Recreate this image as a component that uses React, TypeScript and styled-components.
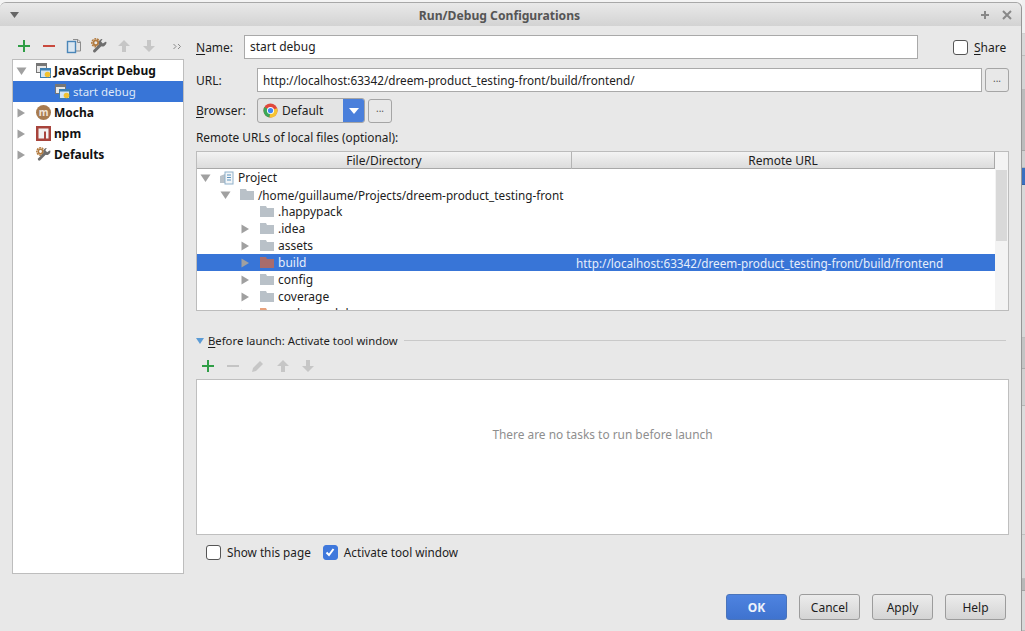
import styled, { createGlobalStyle } from 'styled-components'

const GlobalStyle = createGlobalStyle`
  html, body {
    margin: 0;
    padding: 0;
    background: #cfcfcf;
  }
  * {
    box-sizing: border-box;
  }
  u {
    text-underline-offset: 2px;
  }
`
const Screen = styled.div`
  display: flex;
  width: 1025px;
  height: 631px;
  overflow: hidden;
  font-family: 'Noto Sans', 'Open Sans', sans-serif;
  font-size: 12px;
  color: #1d1d1d;
  background: #f4f4f4;
`
const Dialog = styled.div`
  display: flex;
  flex-direction: column;
  flex: none;
  width: 1022px;
  height: 631px;
  margin-top: 2px;
  background: #e8e8e8;
  border-top: 1px solid #a8a8a8;
  border-right: 1px solid #969696;
  border-top-left-radius: 6px;
  border-top-right-radius: 6px;
`
const TitleBar = styled.div`
  display: flex;
  align-items: center;
  justify-content: space-between;
  flex: none;
  height: 23px;
  padding: 0 8px 0 10px;
  background: linear-gradient(#e9e9e9, #d3d3d3);
  border-top-left-radius: 6px;
  border-top-right-radius: 6px;
`
const TitleText = styled.div`
  margin-left: 1px;
  padding-top: 1px;
  font-weight: 700;
  font-size: 12.15px;
  color: #555;
`
const TitleActions = styled.div`
  display: flex;
  align-items: center;
  gap: 10px;
`
const Body = styled.div`
  display: flex;
  flex: 1;
  min-height: 0;
`
const Sidebar = styled.div`
  display: flex;
  flex-direction: column;
  flex: none;
  width: 196px;
  padding: 0 12px;
`
const SideToolbar = styled.div`
  display: flex;
  align-items: center;
  gap: 9px;
  height: 33px;
  padding: 7px 0 0 4px;
`
const Tree = styled.div`
  width: 172px;
  height: 515px;
  background: #fff;
  border: 1px solid #bdbdbd;
`
const TreeRow = styled.div<{ $selected?: boolean; $indent?: number; $bold?: boolean }>`
  display: flex;
  align-items: center;
  gap: 3px;
  height: 21px;
  padding-left: ${(p) => p.$indent ?? 2}px;
  font-size: ${(p) => (p.$selected ? 11.5 : 12)}px;
  font-weight: ${(p) => (p.$bold ? 700 : 400)};
  color: ${(p) => (p.$selected ? '#dfe8f8' : '#111')};
  background: ${(p) => (p.$selected ? '#3875d7' : 'transparent')};
  white-space: nowrap;
`
const Spacer = styled.span`
  width: 3px;
`
const Main = styled.div`
  display: flex;
  flex-direction: column;
  flex: 1;
  min-width: 0;
  padding: 9px 12px 0 0;
`
const FormRow = styled.div<{ $height: number; $mb?: number }>`
  display: flex;
  align-items: center;
  height: ${(p) => p.$height}px;
  margin-bottom: ${(p) => p.$mb ?? 0}px;
`
const FieldLabel = styled.label<{ $width: number }>`
  flex: none;
  width: ${(p) => p.$width}px;
`
const TextInput = styled.div<{ $width: number }>`
  display: flex;
  align-items: center;
  flex: none;
  width: ${(p) => p.$width}px;
  height: 24px;
  padding: 0 0 1px 5px;
  background: #fff;
  border: 1px solid #a9a9a9;
  white-space: nowrap;
  overflow: hidden;
`
const LongPath = styled.span`
  font-size: 11.72px;
`
const DotsButton = styled.button`
  flex: none;
  width: 24px;
  height: 24px;
  margin-left: 3px;
  padding: 0 0 5px;
  font: inherit;
  font-size: 10px;
  color: #555;
  background: #e8e8e8;
  border: 1px solid #a5a5a5;
  border-radius: 3px;
`
const ShareWrap = styled.div`
  display: flex;
  align-items: center;
  gap: 6px;
  margin-left: 35px;
`
const CheckBox = styled.span<{ $checked?: boolean }>`
  display: flex;
  align-items: center;
  justify-content: center;
  flex: none;
  width: 15px;
  height: 15px;
  background: ${(p) => (p.$checked ? '#3f78dc' : '#fff')};
  border: 1px solid ${(p) => (p.$checked ? '#3f78dc' : '#555')};
  border-radius: 3px;
`
const Combo = styled.div`
  display: flex;
  align-items: center;
  flex: none;
  gap: 4px;
  width: 108px;
  height: 25px;
  padding-left: 5px;
  background: #e4e4e4;
  border: 1px solid #a5a5a5;
  border-radius: 3px;
  overflow: hidden;
`
const ComboArrow = styled.span`
  display: flex;
  align-items: center;
  justify-content: center;
  width: 21px;
  height: 25px;
  margin-left: auto;
  background: #4a7fdb;
`
const SectionLabel = styled.div`
  height: 17px;
  margin-bottom: 5px;
  font-size: 11.85px;
  line-height: 17px;
`
const TableBox = styled.div`
  display: flex;
  flex: none;
  width: 813px;
  height: 160px;
  background: #fff;
  border: 1px solid #bcbcbc;
  overflow: hidden;
`
const TableMain = styled.div`
  flex: none;
  width: 798px;
`
const TableHeader = styled.div`
  display: grid;
  grid-template-columns: 375px 1fr;
  height: 17px;
  background: linear-gradient(#f3f3f3, #dcdcdc);
  border-right: 1px solid #a8a8a8;
  border-bottom: 1px solid #a8a8a8;
`
const HeaderCell = styled.div<{ $divider?: boolean }>`
  text-align: center;
  line-height: 17px;
  border-right: ${(p) => (p.$divider ? '1px solid #b4b4b4' : 'none')};
`
const DirRow = styled.div<{ $selected?: boolean }>`
  display: grid;
  grid-template-columns: 379px 1fr;
  align-items: center;
  height: 17px;
  color: ${(p) => (p.$selected ? '#e6eefb' : '#1d1d1d')};
  background: ${(p) => (p.$selected ? '#3875d7' : 'transparent')};
  white-space: nowrap;
`
const DirCell = styled.div<{ $depth: number }>`
  display: flex;
  align-items: center;
  gap: 4px;
  padding-left: ${(p) => p.$depth}px;
`
const ArrowSlot = styled.span`
  display: flex;
  align-items: center;
  justify-content: center;
  flex: none;
  width: 16px;
  margin-right: 3px;
`
const ScrollTrack = styled.div`
  flex: 1;
  padding: 18px 1px 0;
  background: #f3f3f3;
`
const ScrollThumb = styled.div`
  height: 71px;
  background: #d9d9d9;
`
const BeforeHeader = styled.div`
  display: flex;
  align-items: center;
  gap: 4px;
  height: 17px;
  margin-top: 21px;
  padding-right: 3px;
  font-size: 11.3px;
`
const HeaderRule = styled.div`
  flex: 1;
  height: 1px;
  margin-left: 2px;
  background: #c9c9c9;
`
const BeforeToolbar = styled.div`
  display: flex;
  align-items: center;
  gap: 9px;
  height: 21px;
  margin: 6px 0 3px;
  padding-left: 4px;
`
const TasksBox = styled.div`
  display: flex;
  align-items: center;
  justify-content: center;
  width: 813px;
  height: 156px;
  padding-bottom: 46px;
  font-size: 11.9px;
  color: #8e8e8e;
  background: #fff;
  border: 1px solid #bfbfbf;
`
const OptionsRow = styled.div`
  display: flex;
  align-items: center;
  height: 18px;
  margin-top: 8px;
  padding-left: 10px;
  font-size: 11.75px;
`
const Option = styled.div`
  display: flex;
  align-items: center;
  gap: 6px;
  margin-right: 12px;
`
const Footer = styled.div`
  display: flex;
  justify-content: flex-end;
  gap: 12px;
  margin-top: 33px;
  padding-right: 3px;
`
const DialogButton = styled.button<{ $primary?: boolean }>`
  width: 61px;
  height: 26px;
  padding: 0;
  font: inherit;
  font-weight: ${(p) => (p.$primary ? 700 : 400)};
  color: ${(p) => (p.$primary ? '#eef3fb' : '#1d1d1d')};
  background: ${(p) => (p.$primary ? 'linear-gradient(#4e83e0, #3f73cf)' : 'linear-gradient(#ececec, #d4d4d4)')};
  border: 1px solid ${(p) => (p.$primary ? '#4a74bb' : '#9c9c9c')};
  border-radius: 3px;
`
const Strip = styled.div`
  display: flex;
  flex-direction: column;
  flex: 1;
`
const Band = styled.div<{ $height: number; $color: string }>`
  flex: none;
  height: ${(p) => p.$height}px;
  background: ${(p) => p.$color};
  border-bottom: 1px solid rgba(0, 0, 0, 0.12);
`

const Plus = ({ muted }: { muted?: boolean }) => (
  <svg width="16" height="16" viewBox="0 0 16 16">
    <path d="M8 2v12M2 8h12" stroke={muted ? '#c4c4c4' : '#2f9e46'} strokeWidth="2" />
  </svg>
)
const Minus = ({ muted }: { muted?: boolean }) => (
  <svg width="16" height="16" viewBox="0 0 16 16">
    <path d="M2 8h12" stroke={muted ? '#c4c4c4' : '#c9493d'} strokeWidth="2" />
  </svg>
)
const Copy = () => (
  <svg width="16" height="16" viewBox="0 0 16 16">
    <path d="M7 1.500h5l2.500 2.500v9H10" fill="#e4e4e4" stroke="#8d8d8d" />
    <path d="M11.500 1.500v3h3" fill="none" stroke="#8d8d8d" />
    <rect x="1.500" y="3.500" width="8" height="11" fill="#dbe7f1" stroke="#4a86b8" strokeWidth="1.400" />
  </svg>
)
const Wrench = ({ size = 16 }: { size?: number }) => (
  <svg width={size} height={size} viewBox="0 0 16 16" style={{ flex: 'none' }}>
    <circle cx="4.800" cy="4.800" r="4" fill="none" stroke="#b27a3e" strokeWidth="1.400" strokeDasharray="2 0.800" />
    <circle cx="4.800" cy="4.800" r="2.400" fill="none" stroke="#b27a3e" strokeWidth="1.800" />
    <path d="M3.500 13L10 6.500" stroke="#6e6e6e" strokeWidth="3" strokeLinecap="round" />
    <path d="M15.500 4a4 4 0 0 1-6.500 3.500 4 4 0 0 1 1.500-6.500l1 .1-1.500 2.400 1.800 2 2.700-1.700z" fill="#6e6e6e" />
  </svg>
)
const UpArrow = () => (
  <svg width="16" height="16" viewBox="0 0 16 16">
    <path d="M8 2l6 6h-4v6H6V8H2z" fill="#c6c6c6" />
  </svg>
)
const DownArrow = () => (
  <svg width="16" height="16" viewBox="0 0 16 16">
    <path d="M8 14l6-6h-4V2H6v6H2z" fill="#c6c6c6" />
  </svg>
)
const Pencil = () => (
  <svg width="16" height="16" viewBox="0 0 16 16">
    <path d="M2 14l1-4 7-7 3 3-7 7z" fill="#c6c6c6" />
  </svg>
)
const More = () => (
  <svg width="16" height="16" viewBox="0 0 16 16">
    <path d="M7.500 6L10 8.500 7.500 11M12 6l2.500 2.500L12 11" fill="none" stroke="#8a8a8a" />
  </svg>
)
const Triangle = ({ open }: { open?: boolean }) => (
  <svg width="12" height="12" viewBox="0 0 12 12" style={{ flex: 'none' }}>
    <path d={open ? 'M1.500 2.500h10L6.500 10z' : 'M2.500 1.500L10 6l-7.500 4.500z'} fill="#a0a0a0" />
  </svg>
)
const DebugIcon = () => (
  <svg width="15" height="15" viewBox="0 0 15 15" style={{ flex: 'none' }}>
    <rect x="0.500" y="0.500" width="10" height="9" fill="#e8e8e8" stroke="#767676" />
    <path d="M1 2h9" stroke="#767676" strokeWidth="2" />
    <rect x="4.500" y="5.500" width="10" height="9" fill="#d3e5f3" stroke="#3c7fb1" />
    <path d="M5 6.500h9" stroke="#3c7fb1" strokeWidth="2" />
    <circle cx="11.500" cy="11.500" r="2.800" fill="#f2c230" />
  </svg>
)
const MochaIcon = () => (
  <svg width="15" height="15" viewBox="0 0 15 15" style={{ flex: 'none' }}>
    <circle cx="7.500" cy="7.500" r="7.500" fill="#a87b4f" />
    <text x="7.500" y="10.500" fontSize="10" fill="#f1e4d6" textAnchor="middle" fontFamily="Noto Sans">m</text>
  </svg>
)
const NpmIcon = () => (
  <svg width="15" height="15" viewBox="0 0 15 15" style={{ flex: 'none' }}>
    <rect width="15" height="15" fill="#a8443c" />
    <path d="M2.500 2.500h10v10h-2.500V5.500H8v7H2.500z" fill="#f2f2f2" />
  </svg>
)
const ProjectIcon = () => (
  <svg width="14" height="14" viewBox="0 0 14 14" style={{ flex: 'none' }}>
    <path d="M0 5l5-2v9H0z" fill="#b9c1c8" />
    <rect x="5" y="1" width="8" height="12" fill="#f3f6f8" stroke="#8fb1cb" />
    <path d="M7 4h4M7 6.500h4M7 9h4" stroke="#5b93bf" />
  </svg>
)
const Folder = ({ color = '#b9c1c8' }: { color?: string }) => (
  <svg width="14" height="11" viewBox="0 0 14 11" style={{ flex: 'none' }}>
    <path d="M0 0h6l1 2h7v9H0z" fill={color} />
  </svg>
)
const ChromeIcon = () => (
  <svg width="15" height="15" viewBox="0 0 16 16" style={{ flex: 'none' }}>
    <circle cx="8" cy="8" r="7.500" fill="#e0483c" />
    <path d="M8 8L1.500 4.200A7.500 7.500 0 0 0 7 15.400z" fill="#3aa757" />
    <path d="M8 8l7-2.500A7.500 7.500 0 0 1 7 15.400z" fill="#f6c432" />
    <circle cx="8" cy="8" r="3.800" fill="#fff" />
    <circle cx="8" cy="8" r="2.800" fill="#4286f5" />
  </svg>
)

const dirs = [
  { name: '.happypack' },
  { name: '.idea', arrow: true },
  { name: 'assets', arrow: true },
  { name: 'build', arrow: true, selected: true, color: '#a96c6c', remote: 'http://localhost:63342/dreem-product_testing-front/build/frontend' },
  { name: 'config', arrow: true },
  { name: 'coverage', arrow: true },
  { name: 'node_modules', arrow: true, color: '#e8a27c' },
]

// background windows showing behind the dialog, on the right edge
const bands = [
  { height: 34, color: '#f0f0f0' },
  { height: 22, color: '#d8d8d8' },
  { height: 34, color: '#d4d4d4' },
  { height: 61, color: '#bcbcbc' },
  { height: 17, color: '#d0d0d0' },
  { height: 17, color: '#3a70c0' },
  { height: 153, color: '#d8d8d8' },
  { height: 31, color: '#c4c4c4' },
  { height: 37, color: '#d0d0d0' },
  { height: 129, color: '#dcdcdc' },
  { height: 44, color: '#d8d8d8' },
  { height: 12, color: '#b8b8b8' },
  { height: 40, color: '#d8d8d8' },
]

export default function App(): JSX.Element {
  return (
    <Screen>
      <GlobalStyle />
      <Dialog>
        <TitleBar>
          <svg width="9" height="6" viewBox="0 0 9 6">
            <path d="M0 0h9L4.500 6z" fill="#666" />
          </svg>
          <TitleText>Run/Debug Configurations</TitleText>
          <TitleActions>
            <svg width="12" height="12" viewBox="0 0 12 12">
              <path d="M6 2v8M2 6h8" stroke="#888" strokeWidth="2" />
            </svg>
            <svg width="12" height="12" viewBox="0 0 12 12">
              <path d="M2 2l8 8M10 2l-8 8" stroke="#888" strokeWidth="2" />
            </svg>
          </TitleActions>
        </TitleBar>
        <Body>
          <Sidebar>
            <SideToolbar>
              <Plus />
              <Minus />
              <Copy />
              <Wrench />
              <UpArrow />
              <DownArrow />
              <More />
            </SideToolbar>
            <Tree>
              <TreeRow $bold>
                <Triangle open />
                <Spacer />
                <DebugIcon />
                JavaScript Debug
              </TreeRow>
              <TreeRow $selected $indent={42}>
                <DebugIcon />
                start debug
              </TreeRow>
              <TreeRow $bold>
                <Triangle />
                <Spacer />
                <MochaIcon />
                Mocha
              </TreeRow>
              <TreeRow $bold>
                <Triangle />
                <Spacer />
                <NpmIcon />
                npm
              </TreeRow>
              <TreeRow $bold>
                <Triangle />
                <Spacer />
                <Wrench size={15} />
                Defaults
              </TreeRow>
            </Tree>
          </Sidebar>
          <Main>
            <FormRow $height={24} $mb={9}>
              <FieldLabel $width={48}>
                <u>N</u>ame:
              </FieldLabel>
              <TextInput $width={674}>start debug</TextInput>
              <ShareWrap>
                <CheckBox />
                <span>
                  <u>S</u>hare
                </span>
              </ShareWrap>
            </FormRow>
            <FormRow $height={24} $mb={6}>
              <FieldLabel $width={61}>URL:</FieldLabel>
              <TextInput $width={725}>
                <LongPath>http://localhost:63342/dreem-product_testing-front/build/frontend/</LongPath>
              </TextInput>
              <DotsButton>...</DotsButton>
            </FormRow>
            <FormRow $height={25} $mb={6}>
              <FieldLabel $width={61}>
                <u>B</u>rowser:
              </FieldLabel>
              <Combo>
                <ChromeIcon />
                Default
                <ComboArrow>
                  <svg width="10" height="8" viewBox="0 0 10 8">
                    <path d="M0 1h10L5 7z" fill="#fff" />
                  </svg>
                </ComboArrow>
              </Combo>
              <DotsButton>...</DotsButton>
            </FormRow>
            <SectionLabel>Remote URLs of local files (optional):</SectionLabel>
            <TableBox>
              <TableMain>
                <TableHeader>
                  <HeaderCell $divider>File/Directory</HeaderCell>
                  <HeaderCell>Remote URL</HeaderCell>
                </TableHeader>
                <DirRow>
                  <DirCell $depth={0}>
                    <ArrowSlot>
                      <Triangle open />
                    </ArrowSlot>
                    <ProjectIcon />
                    Project
                  </DirCell>
                </DirRow>
                <DirRow>
                  <DirCell $depth={20}>
                    <ArrowSlot>
                      <Triangle open />
                    </ArrowSlot>
                    <Folder />
                    <LongPath>/home/guillaume/Projects/dreem-product_testing-front</LongPath>
                  </DirCell>
                </DirRow>
                {dirs.map((d) => (
                  <DirRow key={d.name} $selected={d.selected}>
                    <DirCell $depth={40}>
                      <ArrowSlot>{d.arrow && <Triangle />}</ArrowSlot>
                      <Folder color={d.color} />
                      {d.name}
                    </DirCell>
                    <LongPath>{d.remote}</LongPath>
                  </DirRow>
                ))}
              </TableMain>
              <ScrollTrack>
                <ScrollThumb />
              </ScrollTrack>
            </TableBox>
            <BeforeHeader>
              <svg width="8" height="6" viewBox="0 0 8 6">
                <path d="M0 0h8L4 6z" fill="#5b9bd5" />
              </svg>
              <span>
                <u>B</u>efore launch: Activate tool window
              </span>
              <HeaderRule />
            </BeforeHeader>
            <BeforeToolbar>
              <Plus />
              <Minus muted />
              <Pencil />
              <UpArrow />
              <DownArrow />
            </BeforeToolbar>
            <TasksBox>There are no tasks to run before launch</TasksBox>
            <OptionsRow>
              <Option>
                <CheckBox />
                Show this page
              </Option>
              <Option>
                <CheckBox $checked>
                  <svg width="10" height="10" viewBox="0 0 10 10">
                    <path d="M1.500 5.500l2.500 2.500 4.500-6" fill="none" stroke="#fff" strokeWidth="2" />
                  </svg>
                </CheckBox>
                Activate tool window
              </Option>
            </OptionsRow>
            <Footer>
              <DialogButton $primary>OK</DialogButton>
              <DialogButton>Cancel</DialogButton>
              <DialogButton>Apply</DialogButton>
              <DialogButton>Help</DialogButton>
            </Footer>
          </Main>
        </Body>
      </Dialog>
      <Strip>
        {bands.map((b, i) => (
          <Band key={i} $height={b.height} $color={b.color} />
        ))}
      </Strip>
    </Screen>
  )
}
